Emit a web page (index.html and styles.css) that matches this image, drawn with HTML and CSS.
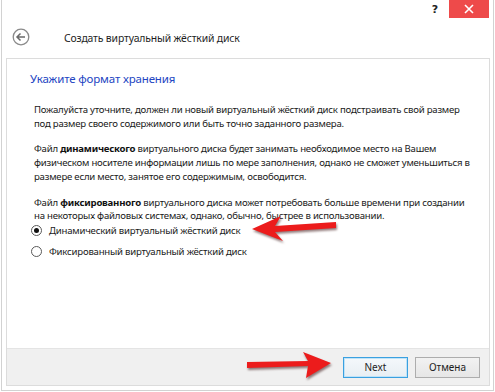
FILE: index.html
```html
<!DOCTYPE html>
<html>
<head>
<meta charset="utf-8">
<link rel="stylesheet" href="styles.css">
</head>
<body>
<div class="window">
  <div class="titlebar">
    <span class="help">?</span>
    <span class="close"><svg width="10" height="10" viewBox="0 0 10 10"><path d="M1 1 L9 9 M9 1 L1 9" stroke="#fff" stroke-width="1.6" fill="none"/></svg></span>
  </div>
  <div class="header">
    <span class="back"><svg width="18" height="18" viewBox="0 0 18 18"><circle cx="9" cy="9" r="7.8" stroke="#8a8a8a" stroke-width="1.3" fill="none"/><path d="M5 9 H13 M8.5 5.5 L5 9 L8.5 12.5" stroke="#6a6a6a" stroke-width="1.5" fill="none"/></svg></span>
    <span class="title">Создать виртуальный жёсткий диск</span>
  </div>
  <div class="panel">
    <div class="content">
      <h1 class="heading">Укажите формат хранения</h1>
      <p class="para">Пожалуйста уточните, должен ли новый виртуальный жёсткий диск подстраивать свой размер<br>под размер своего содержимого или быть точно заданного размера.</p>
      <p class="para">Файл <b>динамического</b> виртуального диска будет занимать необходимое место на Вашем<br>физическом носителе информации лишь по мере заполнения, однако не сможет уменьшиться в<br>размере если место, занятое его содержимым, освободится.</p>
      <p class="para">Файл <b>фиксированного</b> виртуального диска может потребовать больше времени при создании<br>на некоторых файловых системах, однако, обычно, быстрее в использовании.</p>
      <div class="options">
        <div class="option"><span class="radio checked"></span><span>Динамический виртуальный жёсткий диск</span></div>
        <div class="option"><span class="radio"></span><span>Фиксированный виртуальный жёсткий диск</span></div>
      </div>
    </div>
    <div class="footer">
      <span class="btn primary">Next</span>
      <span class="btn">Отмена</span>
    </div>
  </div>
</div>
<svg class="arrows" width="495" height="392" viewBox="0 0 495 392">
  <polygon points="252,229 281,216 275,226 336,222 336,228 275,232 283,241" />
  <polygon points="331,363 303,352 308,361 247,362 247,368 308,366 306,378" />
</svg>
</body>
</html>
```
FILE: styles.css
```css
html, body {
  margin: 0;
  padding: 0;
  background: #ffffff;
}
body {
  width: 495px;
  height: 392px;
  position: relative;
  overflow: hidden;
  font-family: "Noto Sans", "Open Sans", sans-serif;
  color: #1e1e1e;
  white-space: nowrap;
}
.window {
  box-sizing: border-box;
  margin-left: 1px;
  width: 493px;
  height: 391px;
  border-left: 1px solid #d2d2d2;
  border-right: 1px solid #d2d2d2;
  border-bottom: 1px solid #d2d2d2;
  background: #fff;
  display: flex;
  flex-direction: column;
}
.titlebar {
  height: 18px;
  display: flex;
  justify-content: flex-end;
  align-items: stretch;
  padding-right: 4px;
}
.help {
  font-family: "DejaVu Sans", sans-serif;
  font-weight: bold;
  font-size: 11px;
  line-height: 20px;
  width: 14px;
  margin-right: 7px;
  text-align: center;
  color: #222;
}
.close {
  width: 40px;
  height: 18px;
  background: #ee4a4a;
  display: flex;
  align-items: center;
  justify-content: center;
}
.header {
  height: 40px;
  display: flex;
  align-items: center;
  padding-left: 10px;
  padding-bottom: 4px;
  box-sizing: border-box;
}
.back {
  width: 18px;
  height: 18px;
  display: block;
  margin-top: 2px;
}
.back svg { display: block; }
.title {
  margin-left: 34px;
  font-size: 10.4px;
  letter-spacing: -0.15px;
  color: #1e1e1e;
  margin-top: 3px;
}
.panel {
  box-sizing: border-box;
  margin-left: 4px;
  width: 484px;
  height: 328px;
  border: 1px solid #dcdcdc;
  display: flex;
  flex-direction: column;
}
.content {
  flex: 1;
  background: #fff;
  padding: 10px 0 0 23px;
}
.heading {
  margin: 0;
  font-weight: normal;
  font-size: 11.5px;
  letter-spacing: -0.15px;
  line-height: 20px;
  color: #2345c2;
}
.para {
  margin: 14px 0 0 4px;
  font-size: 9.6px;
  letter-spacing: -0.22px;
  line-height: 13.7px;
  color: #1a1a1a;
}
.para + .para { margin-top: 12px; }
.para b { font-weight: bold; color: #111; }
.options {
  margin: 0 0 0 1px;
  display: flex;
  flex-direction: column;
  gap: 6px;
}
.option {
  display: flex;
  align-items: center;
  font-size: 9.6px;
  letter-spacing: -0.22px;
  line-height: 15px;
  color: #1a1a1a;
}
.radio {
  box-sizing: border-box;
  width: 11px;
  height: 11px;
  border: 1px solid #5a5a5a;
  border-radius: 50%;
  background: #fff;
  margin-right: 7px;
  display: flex;
  align-items: center;
  justify-content: center;
}
.radio.checked::after {
  content: "";
  width: 5px;
  height: 5px;
  border-radius: 50%;
  background: #111;
}
.footer {
  height: 37px;
  box-sizing: border-box;
  border-top: 1px solid #e4e4e4;
  background: #f0f0f0;
  display: flex;
  justify-content: flex-end;
  align-items: center;
  gap: 7px;
  padding-right: 9px;
}
.btn {
  box-sizing: border-box;
  width: 65px;
  height: 21px;
  border: 1px solid #adadad;
  background: linear-gradient(#f2f2f2, #e6e6e6);
  font-size: 10px;
  line-height: 19px;
  text-align: center;
  color: #1e1e1e;
}
.btn.primary {
  border: 1px solid #3aa0e0;
  box-shadow: inset 0 0 0 1px #bfe3f8;
  background: linear-gradient(#f4f8fb, #e8eef3);
}
.arrows {
  position: absolute;
  left: 0;
  top: 0;
  pointer-events: none;
}
.arrows polygon {
  fill: #ec1c1c;
  filter: drop-shadow(1px 2px 1px rgba(60, 20, 20, 0.55));
}
```
